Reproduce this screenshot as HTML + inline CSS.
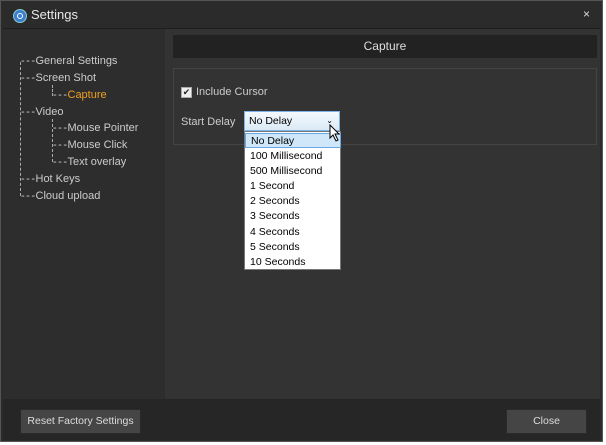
<!DOCTYPE html><html><head><style>
body{margin:0;width:606px;height:445px;background:#fff;font-family:"Liberation Sans",sans-serif;position:relative;overflow:hidden}
.a{position:absolute}
.win{left:0;top:0;width:603px;height:442px;background:#2b2b2b;border:1px solid #555;box-sizing:border-box}
.t{color:#ccc;font-size:11px;white-space:nowrap}
.d{letter-spacing:1.5px;margin-right:-1px}
.it{position:absolute;left:0;width:96px;height:15px;font-size:10.5px;color:#000;padding-left:5px;line-height:15px;box-sizing:border-box}
.btn{background:#454545;border:1px solid #2a2a2a;color:#ddd;font-size:10.5px;text-align:center;line-height:22px}
</style></head><body>
<div class="a win"></div>
<div class="a" style="left:13px;top:9px;width:12px;height:12px;border-radius:50%;background:#3b7fd0;border:1px solid #8cc"></div>
<div class="a" style="left:17px;top:13px;width:4px;height:4px;border-radius:50%;border:1px solid #fff"></div>
<div class="a t" style="left:31px;top:7px;font-size:13px;color:#e8e8e8">Settings</div>
<div class="a t" style="left:583px;top:7px;font-size:12px;color:#ddd">×</div>
<div class="a" style="left:3px;top:28px;width:597px;height:1px;background:#1e1e1e"></div>
<div class="a" style="left:3px;top:29px;width:162px;height:370px;background:#2d2d2d"></div>
<div class="a" style="left:165px;top:29px;width:435px;height:370px;background:#333"></div>
<div class="a" style="left:3px;top:399px;width:597px;height:41px;background:#262626"></div>
<!-- tree -->
<div class="a" style="left:20px;top:62px;width:0;height:134px;border-left:1px dashed #aaa"></div>
<div class="a" style="left:52px;top:85px;height:11px;border-left:1px dashed #aaa"></div>
<div class="a" style="left:52px;top:119px;height:43px;border-left:1px dashed #aaa"></div>
<div class="a t" style="left:21px;top:55px"><span class="d">---</span>General Settings</div>
<div class="a t" style="left:21px;top:72px"><span class="d">---</span>Screen Shot</div>
<div class="a t" style="left:53px;top:89px"><span class="d">---</span><span style="color:#f0a020">Capture</span></div>
<div class="a t" style="left:21px;top:106px"><span class="d">---</span>Video</div>
<div class="a t" style="left:53px;top:122px"><span class="d">---</span>Mouse Pointer</div>
<div class="a t" style="left:53px;top:139px"><span class="d">---</span>Mouse Click</div>
<div class="a t" style="left:53px;top:156px"><span class="d">---</span>Text overlay</div>
<div class="a t" style="left:21px;top:173px"><span class="d">---</span>Hot Keys</div>
<div class="a t" style="left:21px;top:190px"><span class="d">---</span>Cloud upload</div>
<!-- right -->
<div class="a" style="left:173px;top:35px;width:424px;height:23px;background:#222;color:#ddd;font-size:12px;text-align:center;line-height:23px">Capture</div>
<div class="a" style="left:173px;top:68px;width:424px;height:77px;border:1px solid #444;box-sizing:border-box"></div>
<div class="a" style="left:181px;top:87px;width:9px;height:9px;border:1px solid #aaa;background:#eee;font-size:9px;line-height:9px;text-align:center;color:#222">✔</div>
<div class="a t" style="left:196px;top:86px">Include Cursor</div>
<div class="a t" style="left:181px;top:116px">Start Delay</div>
<div class="a" style="left:244px;top:111px;width:96px;height:20px;background:linear-gradient(#f4f9fd,#dbeaf6);border:1px solid #7eb4ea;box-sizing:border-box;font-size:10.5px;line-height:18px;padding-left:4px">No Delay<span style="position:absolute;right:6px;top:0;font-size:8px">⌄</span></div>
<div class="a" style="left:244px;top:131px;width:97px;height:139px;background:#fff;border:1px solid #777;box-sizing:border-box">
<div class="it" style="top:1px;background:#cfe7f8;border:1px solid #66a7e8">No Delay</div>
<div class="it" style="top:17px">100 Millisecond</div>
<div class="it" style="top:32px">500 Millisecond</div>
<div class="it" style="top:47px">1 Second</div>
<div class="it" style="top:62px">2 Seconds</div>
<div class="it" style="top:77px">3 Seconds</div>
<div class="it" style="top:93px">4 Seconds</div>
<div class="it" style="top:108px">5 Seconds</div>
<div class="it" style="top:123px">10 Seconds</div>
</div>
<svg class="a" style="left:329px;top:124px" width="12" height="18"><path d="M1 1 L1 14 L4 11 L7 17 L9 16 L6 10 L10 10 Z" fill="#fff" stroke="#000" stroke-width="1"/></svg>
<div class="a btn" style="left:20px;top:409px;width:119px;height:23px">Reset Factory Settings</div>
<div class="a btn" style="left:506px;top:409px;width:79px;height:23px">Close</div>
</body></html>
